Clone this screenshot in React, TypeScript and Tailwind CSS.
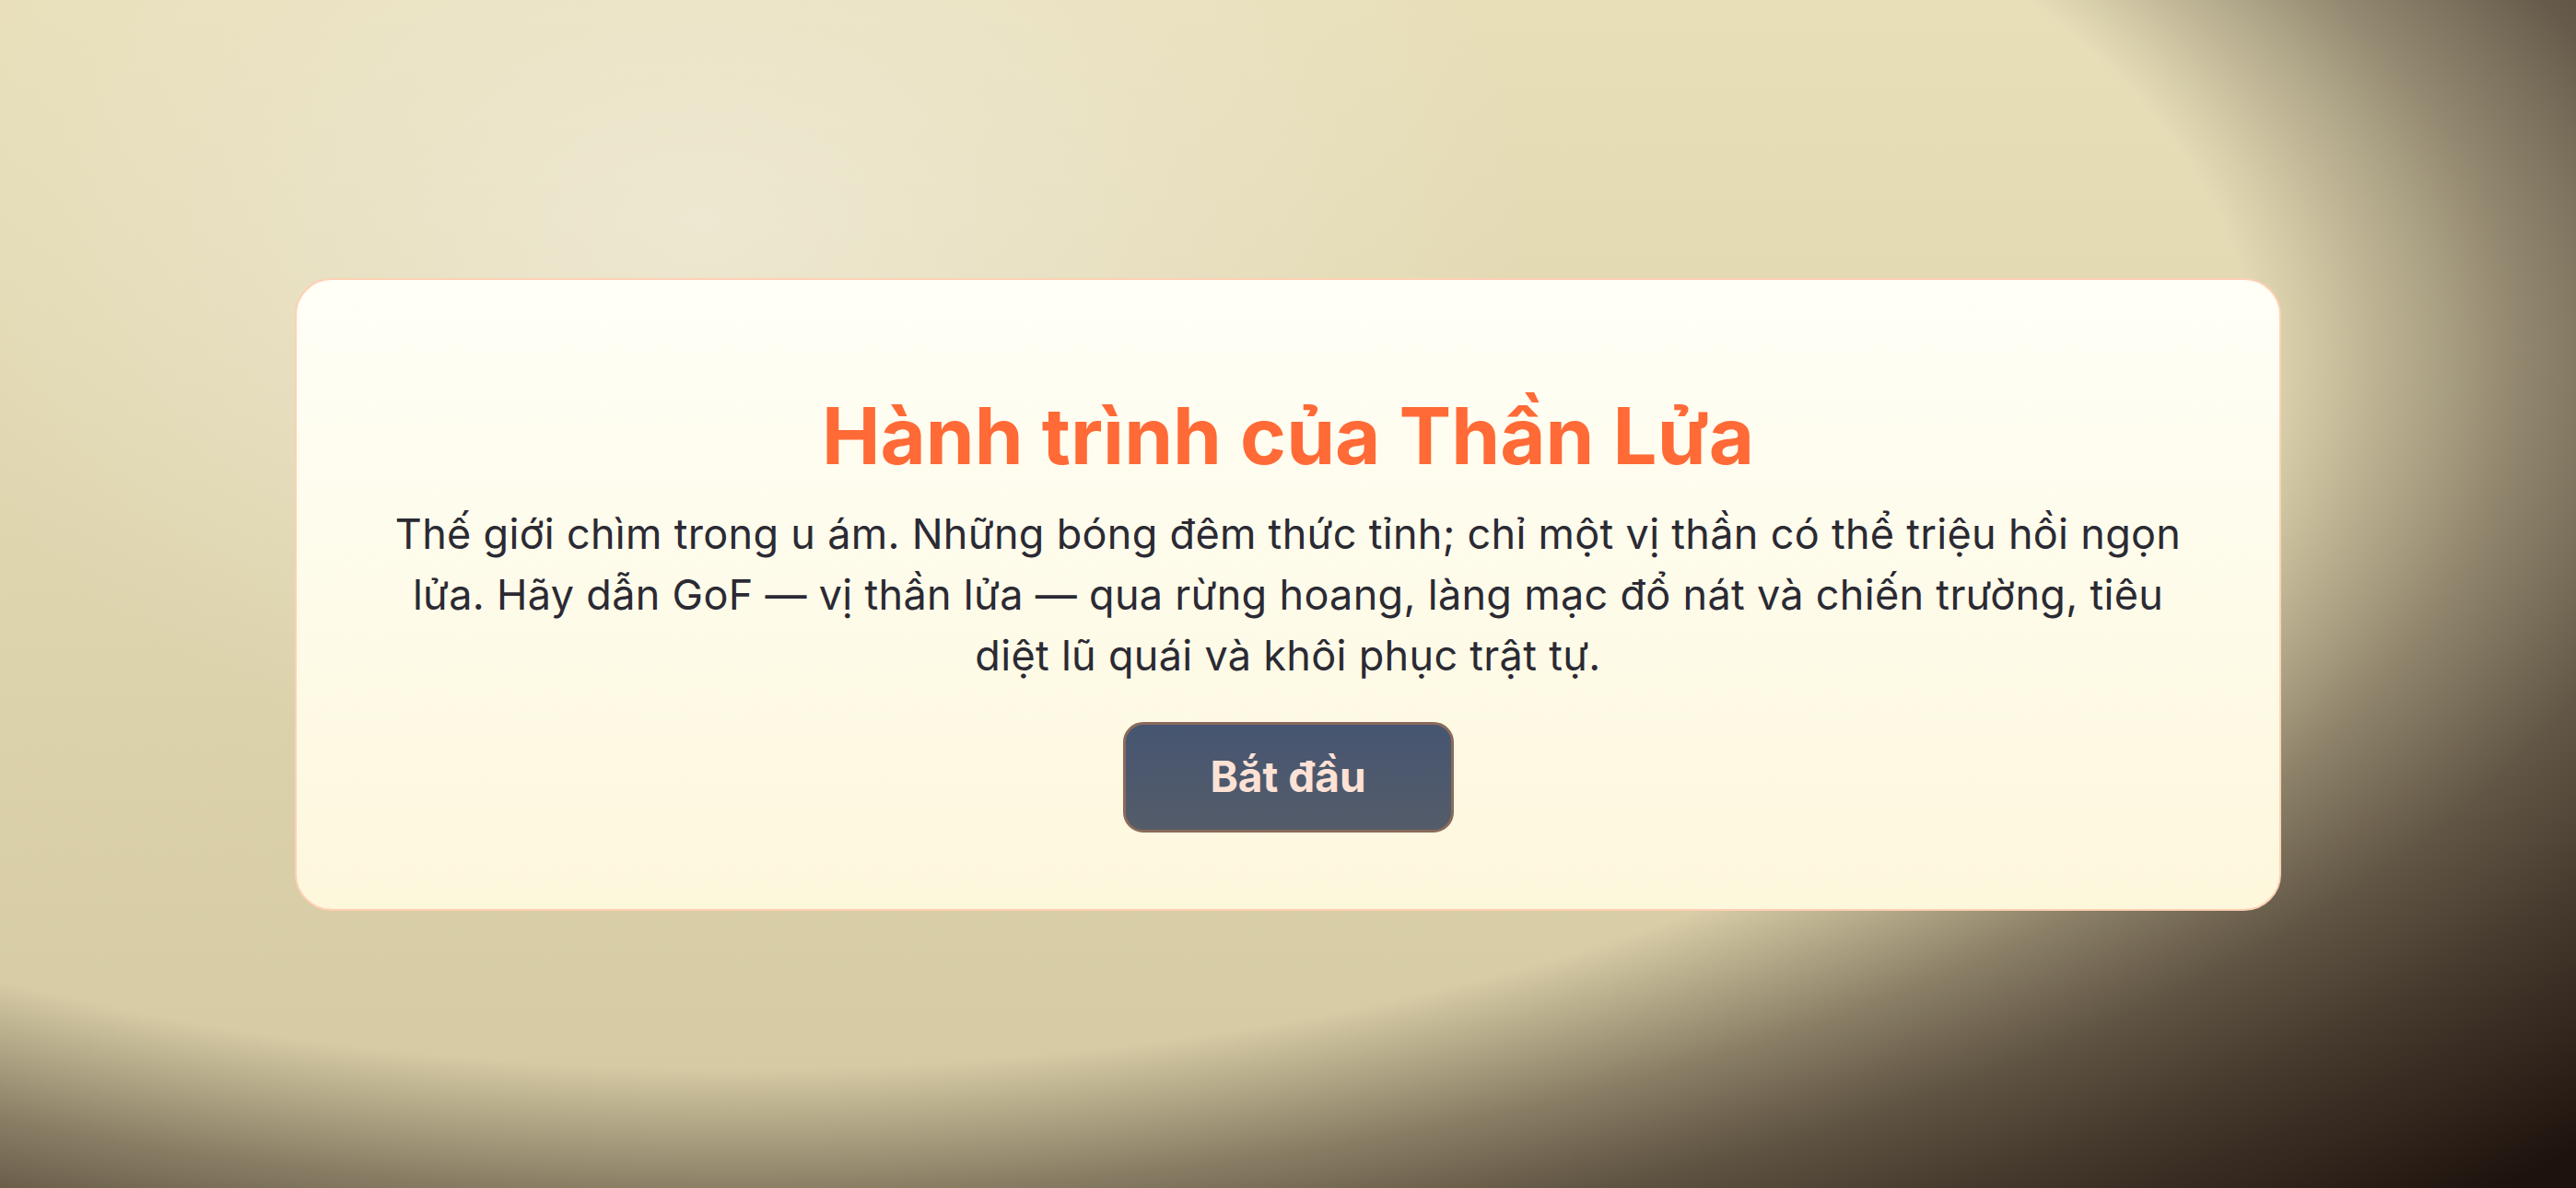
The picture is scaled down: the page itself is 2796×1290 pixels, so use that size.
import React from 'react';

export default function App() {
    return (
        <div className="min-h-screen w-full flex items-center justify-center bg-[radial-gradient(ellipse_1647px_760px_at_800px_400px,rgba(30,18,13,0)_100%,rgba(30,18,13,0.42)_118%,rgba(30,18,13,0.64)_130%,rgba(30,18,13,0.78)_142%,rgba(30,18,13,1)_165%),radial-gradient(ellipse_900px_620px_at_760px_240px,rgba(240,236,218,0.75),rgba(240,236,218,0)_100%),linear-gradient(to_bottom,#e8dfb9,#d3c8a1)] font-['Inter','Noto_Sans',sans-serif]">
            {/* Intro card */}
            <div className="w-[2156px] rounded-[40px] border-2 border-[#ffd0b4] bg-gradient-to-b from-[#fffff7] to-[#fdf7dc] px-[96px] pt-[120px] pb-[83px] flex flex-col items-center text-center">
                <h1 className="text-[85px] leading-[100px] font-bold text-[#ff6a36]">Hành trình của Thần Lửa</h1>
                <p className="mt-[23px] text-[45px] leading-[66px] tracking-[0.3px] text-[#2b2a33]">
                    Thế giới chìm trong u ám. Những bóng đêm thức tỉnh; chỉ một vị thần có thể triệu hồi ngọn lửa. Hãy dẫn GoF — vị thần lửa — qua rừng hoang, làng mạc đổ nát và chiến trường, tiêu diệt lũ quái và khôi phục trật tự.
                </p>
                <button className="mt-[39px] w-[359px] h-[120px] rounded-[22px] border-[3px] border-[#8a6a5c] bg-gradient-to-b from-[#465571] to-[#545c69] text-[46px] font-bold text-[#ffe2d6]">
                    Bắt đầu
                </button>
            </div>
        </div>
    );
}
